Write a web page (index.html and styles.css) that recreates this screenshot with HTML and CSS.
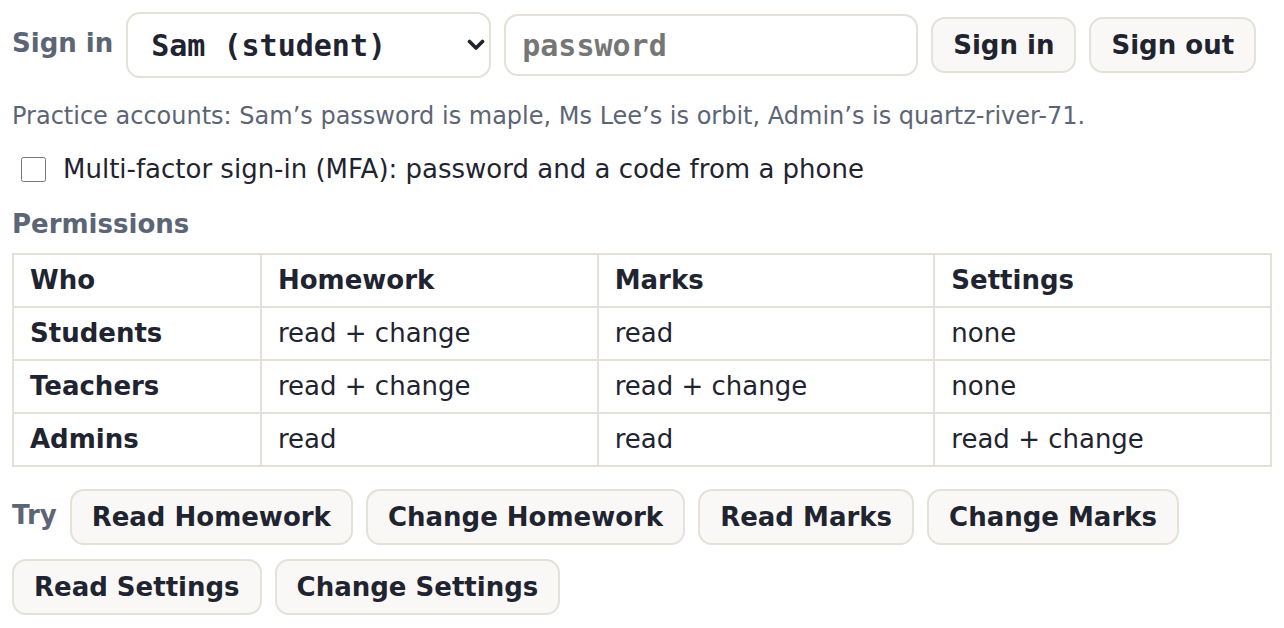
FILE: index.html
```html
<!DOCTYPE html>
<html lang="en">
<head>
  <meta charset="UTF-8">
  <meta name="viewport" content="width=device-width, initial-scale=1.0">
  <title>Sign in and permissions</title>
  <link rel="stylesheet" href="styles.css">
</head>
<body>
  <div class="signin-row">
    <span class="label">Sign in</span>
    <span class="select-wrap">
      <select class="user-select" id="userSelect">
        <option>Sam (student)</option>
        <option>Ms Lee (teacher)</option>
        <option>Admin</option>
      </select>
      <svg class="chevron" width="18" height="12" viewBox="0 0 18 12">
        <path d="M2.5 2.5 L9 9 L15.5 2.5" fill="none" stroke="#1f2430" stroke-width="3.6" stroke-linecap="round" stroke-linejoin="round"/>
      </svg>
    </span>
    <input class="password" type="password" placeholder="password">
    <button class="btn">Sign in</button>
    <button class="btn">Sign out</button>
  </div>
  <p class="hint">Practice accounts: Sam’s password is maple, Ms Lee’s is orbit, Admin’s is quartz-river-71.</p>
  <label class="mfa">
    <input type="checkbox" class="mfa-box">
    <span>Multi-factor sign-in (MFA): password and a code from a phone</span>
  </label>
  <h2 class="section-title">Permissions</h2>
  <table class="perms">
    <colgroup>
      <col class="col-who">
      <col>
      <col>
      <col>
    </colgroup>
    <thead>
      <tr><th>Who</th><th>Homework</th><th>Marks</th><th>Settings</th></tr>
    </thead>
    <tbody>
      <tr><th>Students</th><td>read + change</td><td>read</td><td>none</td></tr>
      <tr><th>Teachers</th><td>read + change</td><td>read + change</td><td>none</td></tr>
      <tr><th>Admins</th><td>read</td><td>read</td><td>read + change</td></tr>
    </tbody>
  </table>
  <div class="try-row">
    <span class="label">Try</span>
    <button class="btn">Read Homework</button>
    <button class="btn">Change Homework</button>
    <button class="btn">Read Marks</button>
    <button class="btn">Change Marks</button>
    <button class="btn">Read Settings</button>
    <button class="btn">Change Settings</button>
  </div>
</body>
</html>
```

FILE: styles.css
```css
body {
  font-family: "DejaVu Sans", sans-serif;
  font-size: 26px;
  color: #1f2430;
  background: #fff;
  margin: 0;
  padding: 12px;
}
.signin-row, .try-row {
  display: flex;
  flex-wrap: wrap;
  align-items: center;
  gap: 14px 13px;
}
.label {
  font-weight: bold;
  color: #5c6575;
  margin-top: -4px;
}
.select-wrap {
  position: relative;
  display: inline-flex;
}
.user-select {
  appearance: none;
  font-family: "DejaVu Sans Mono", monospace;
  font-weight: bold;
  font-size: 30px;
  color: #1f2430;
  width: 365px;
  height: 66px;
  padding: 0 40px 0 23px;
  border: 2px solid #e4e1db;
  border-radius: 14px;
  background: #fff;
}
.chevron {
  position: absolute;
  right: 6px;
  top: 27px;
  pointer-events: none;
}
.password {
  font-family: "DejaVu Sans Mono", monospace;
  font-weight: bold;
  font-size: 30px;
  width: 414px;
  height: 62px;
  box-sizing: border-box;
  padding: 0 16px;
  border: 2px solid #e4e1db;
  border-radius: 14px;
}
.password::placeholder {
  color: #767676;
}
.btn {
  font-family: "DejaVu Sans", sans-serif;
  font-weight: bold;
  font-size: 26px;
  color: #1f2430;
  background: #f9f8f6;
  border: 2px solid #e4e1db;
  border-radius: 14px;
  padding: 11px 20px;
  cursor: pointer;
}
.hint {
  font-size: 24px;
  color: #5c6575;
  margin: 24px 0 0;
}
.mfa {
  display: flex;
  align-items: center;
  gap: 17px;
  margin: 24px 0 0 9px;
}
.mfa-box {
  width: 25px;
  height: 25px;
  margin: 0;
}
.section-title {
  font-size: 26px;
  color: #5c6575;
  margin: 25px 0 14px;
}
.perms {
  width: 100%;
  border-collapse: collapse;
  table-layout: fixed;
  margin-bottom: 22px;
}
.col-who {
  width: 248px;
}
.perms th, .perms td {
  border: 2px solid #e4e1db;
  text-align: left;
  padding: 8px 16px;
  line-height: 35px;
}
.perms td {
  font-weight: normal;
}
```
